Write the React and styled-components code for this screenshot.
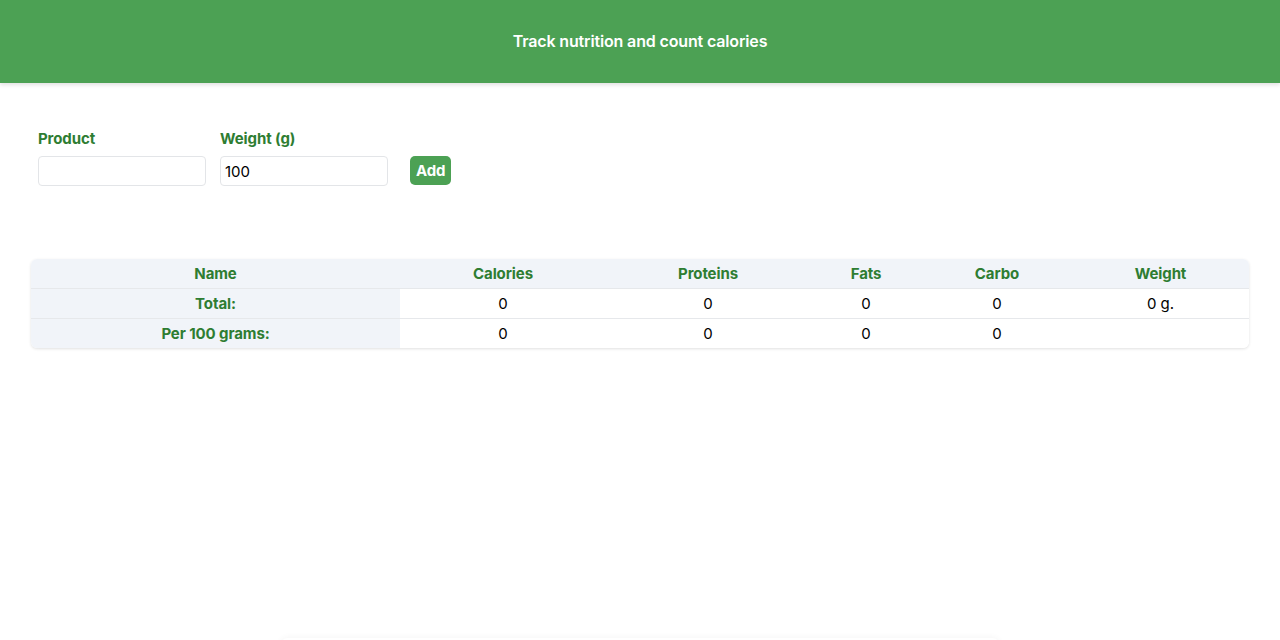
import React, { useState } from 'react';
import styled, { createGlobalStyle } from 'styled-components';

const GlobalStyle = createGlobalStyle`
  * { box-sizing: border-box; }
  body {
    margin: 0;
    font-family: Inter, "Liberation Sans", sans-serif;
    color: #111;
    background: #fff;
  }
`;

const Header = styled.header`
  height: 83px;
  padding-bottom: 2px;
  background: #4ca154;
  display: flex;
  align-items: center;
  justify-content: center;
  box-shadow: 0 2px 4px rgba(0, 0, 0, 0.12);
`;

const Title = styled.h1`
  margin: 0;
  color: #fff;
  font-size: 16px;
  font-weight: 600;
  letter-spacing: -0.15px;
`;

const Main = styled.main`
  padding: 0 31px;
`;

const AddForm = styled.form`
  display: flex;
  align-items: flex-end;
  gap: 14px;
  padding: 47px 0 0 7px;
`;

const Field = styled.label`
  display: flex;
  flex-direction: column;
  gap: 8px;
`;

const Label = styled.span`
  color: #2e7d32;
  font-size: 15px;
  font-weight: 700;
  line-height: 18px;
  letter-spacing: -0.1px;
`;

const Input = styled.input`
  width: 168px;
  height: 30px;
  border: 1px solid #e3e5e8;
  border-radius: 4px;
  padding: 0 4px;
  font: inherit;
  font-size: 15px;
  color: #000;
  outline: none;
`;

const AddButton = styled.button`
  margin: 0 0 1px 8px;
  height: 29px;
  padding: 0 6px;
  border: none;
  border-radius: 5px;
  background: #4ca154;
  color: #fff;
  font: inherit;
  font-size: 15px;
  font-weight: 700;
  letter-spacing: -0.2px;
  cursor: pointer;
`;

const Table = styled.div`
  margin-top: 73px;
  display: grid;
  grid-template-columns: 369px 206px 204px 112px 150px 1fr;
  border-radius: 6px;
  overflow: hidden;
  box-shadow: 0 1px 3px rgba(0, 0, 0, 0.12);
`;

const Cell = styled.div`
  height: ${p => (p.$head ? 29 : 30)}px;
  display: flex;
  align-items: center;
  justify-content: center;
  font-size: 15px;
  letter-spacing: -0.1px;
  font-weight: ${p => (p.$head || p.$name ? 700 : 400)};
  color: ${p => (p.$head || p.$name ? '#2e7d32' : '#000')};
  background: ${p => (p.$head || p.$name ? '#f1f4f9' : '#fff')};
  border-top: ${p => (p.$head ? 'none' : '1px solid #e6e8eb')};
`;

const Below = styled.div`
  margin: 290px auto 0;
  width: 720px;
  height: 60px;
  border-radius: 8px;
  box-shadow: 0 -1px 6px rgba(0, 0, 0, 0.04);
`;

const columns = ['Name', 'Calories', 'Proteins', 'Fats', 'Carbo', 'Weight'];

export default function App() {
  const [product, setProduct] = useState('');
  const [weight, setWeight] = useState('100');
  const rows = [
    ['Total:', '0', '0', '0', '0', '0 g.'],
    ['Per 100 grams:', '0', '0', '0', '0', ''],
  ];

  return (
    <>
      <GlobalStyle />
      <Header>
        <Title>Track nutrition and count calories</Title>
      </Header>
      <Main>
        <AddForm onSubmit={e => e.preventDefault()}>
          <Field>
            <Label>Product</Label>
            <Input value={product} onChange={e => setProduct(e.target.value)} />
          </Field>
          <Field>
            <Label>Weight (g)</Label>
            <Input value={weight} onChange={e => setWeight(e.target.value)} />
          </Field>
          <AddButton type="submit">Add</AddButton>
        </AddForm>
        <Table>
          {columns.map(c => (
            <Cell key={c} $head>{c}</Cell>
          ))}
          {rows.map(r =>
            r.map((v, i) => (
              <Cell key={r[0] + i} $name={i === 0}>{v}</Cell>
            ))
          )}
        </Table>
        <Below />
      </Main>
    </>
  );
}
